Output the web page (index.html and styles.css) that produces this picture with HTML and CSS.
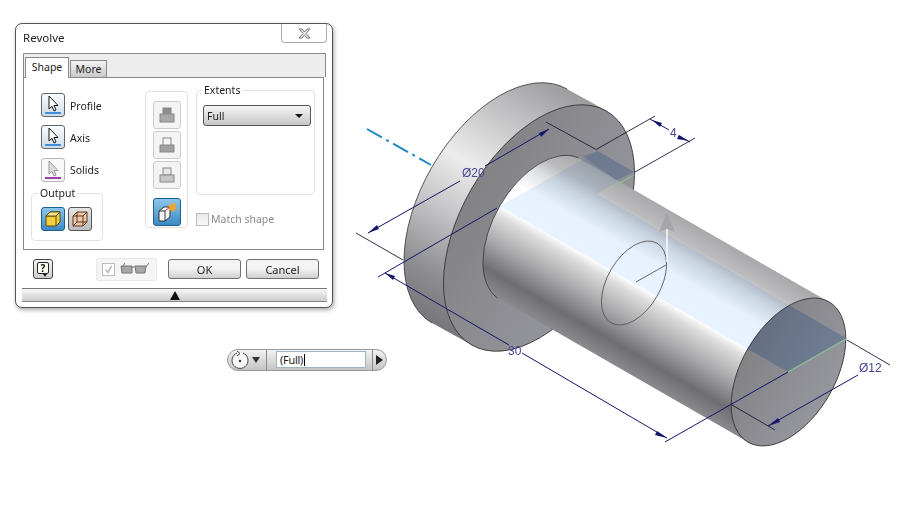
FILE: index.html
```html
<!DOCTYPE html>
<html lang="en">
<head>
  <meta charset="UTF-8">
  <title>Revolve</title>
  <link rel="stylesheet" href="styles.css">
</head>
<body>
  <div class="scene">

    <!-- the part in the viewport -->
    <svg class="part" width="908" height="506" viewBox="0 0 908 506">
      <defs>
        <linearGradient id="rim" gradientUnits="userSpaceOnUse" x1="567" y1="89" x2="432" y2="323">
          <stop offset="0" stop-color="#9c9c9e"/>
          <stop offset="0.16" stop-color="#bcbcbe"/>
          <stop offset="0.42" stop-color="#ececec"/>
          <stop offset="0.62" stop-color="#c4c4c6"/>
          <stop offset="0.85" stop-color="#8c8c90"/>
          <stop offset="1" stop-color="#77777b"/>
        </linearGradient>
        <linearGradient id="shaft" gradientUnits="userSpaceOnUse" x1="829" y1="302" x2="748" y2="442">
          <stop offset="0" stop-color="#a8a8aa"/>
          <stop offset="0.12" stop-color="#bcbcbe"/>
          <stop offset="0.2" stop-color="#dcdee0"/>
          <stop offset="0.33" stop-color="#fdfdfd"/>
          <stop offset="0.5" stop-color="#ffffff"/>
          <stop offset="0.56" stop-color="#dcdcdc"/>
          <stop offset="0.72" stop-color="#a8a8aa"/>
          <stop offset="0.88" stop-color="#6e6e72"/>
          <stop offset="1" stop-color="#8a8a8e"/>
        </linearGradient>
        <linearGradient id="face" x1="0" y1="0" x2="0" y2="1">
          <stop offset="0" stop-color="#838386"/>
          <stop offset="1" stop-color="#96969e"/>
        </linearGradient>
        <clipPath id="end-face">
          <ellipse cx="788.5" cy="372" rx="81" ry="46.8" transform="rotate(-60 788.5 372)"/>
        </clipPath>
      </defs>

      <!-- flange -->
      <path d="M567 89 L607 111 L472 345 L432 323 A135 78 -60 0 1 567 89 Z" fill="url(#rim)"/>
      <path d="M432 323 A135 78 -60 0 1 567 89" class="edge"/>
      <ellipse cx="539" cy="228" rx="135" ry="78" transform="rotate(-60 539 228)" fill="url(#face)" stroke="#333" stroke-width="0.8"/>

      <!-- shaft -->
      <path d="M578.5 158 L829 302 L748 442 L497.5 298 A81 46.8 -60 0 1 578.5 158 Z" fill="url(#shaft)"/>
      <path d="M497.5 298 A81 46.8 -60 0 1 578.5 158" class="edge"/>
      <ellipse cx="788.5" cy="372" rx="81" ry="46.8" transform="rotate(-60 788.5 372)" fill="url(#face)" stroke="#333" stroke-width="0.8"/>

      <!-- sketch plane -->
      <polygon class="plane" points="500,206 788,372 846,338 597,194 634,172 598,151"/>
      <polygon class="plane-dark" points="500,206 788,372 846,338 597,194" clip-path="url(#end-face)"/>
      <polygon class="plane-dark" points="583,156 598,151 634,172 616,180"/>
      <line x1="788" y1="372" x2="846" y2="339" stroke="#86c096" stroke-width="1.4"/>
      <line x1="615" y1="186" x2="634" y2="175" stroke="#86c096" stroke-width="1.4"/>

      <!-- profile circle and direction arrow -->
      <ellipse cx="634" cy="283" rx="46" ry="26.6" transform="rotate(-60 634 283)" fill="none" stroke="#555" stroke-width="0.8"/>
      <line x1="636" y1="282" x2="666" y2="265" stroke="#444" stroke-width="0.8"/>
      <line x1="667" y1="228" x2="667" y2="262" stroke="#fff" stroke-width="1.6" stroke-opacity="0.85"/>
      <polygon points="667,212 659,232 667,229 675,232" fill="#a2a2a8" fill-opacity="0.8"/>

      <!-- revolve axis -->
      <line x1="367" y1="129" x2="431" y2="165" stroke="#1f87c6" stroke-width="2" stroke-dasharray="17 5 3 5"/>

      <!-- dimensions: extension lines -->
      <g class="dim-ext">
        <line x1="356" y1="233" x2="403" y2="260"/>
        <line x1="546" y1="122" x2="597" y2="150"/>
        <line x1="597" y1="149" x2="655" y2="116"/>
        <line x1="635" y1="172" x2="695" y2="138"/>
        <line x1="847" y1="340" x2="890" y2="365"/>
        <line x1="732" y1="405" x2="775" y2="430"/>
      </g>
      <!-- dimensions: lines -->
      <g class="dim-line">
        <line x1="368" y1="233" x2="460" y2="181"/>
        <line x1="485" y1="166" x2="549" y2="129"/>
        <line x1="378" y1="277" x2="497" y2="208"/>
        <line x1="385" y1="273" x2="509" y2="345"/>
        <line x1="522" y1="353" x2="667" y2="438"/>
        <line x1="665" y1="442" x2="788" y2="372"/>
        <line x1="650" y1="119" x2="669" y2="130"/>
        <line x1="678" y1="136" x2="690" y2="142"/>
        <line x1="768" y1="426" x2="858" y2="375"/>
      </g>
      <g class="dim-arrow">
        <polygon points="368,233 377,225 379,229"/>
        <polygon points="549,129 539,133 541,137"/>
        <polygon points="385,273 395,276 393,280"/>
        <polygon points="667,438 657,431 655,435"/>
        <polygon points="652,120 662,123 660,127"/>
        <polygon points="689,141 679,135 677,139"/>
        <polygon points="768,426 778,418 780,422"/>
      </g>
      <text class="dim-text" x="462" y="177">Ø20</text>
      <text class="dim-text" x="670" y="137">4</text>
      <text class="dim-text" x="508" y="355">30</text>
      <text class="dim-text" x="859" y="372">Ø12</text>
    </svg>

    <!-- Revolve dialog -->
    <div class="dialog">
      <div class="title-row">
        <span class="title">Revolve</span>
        <button class="close-btn">
          <svg width="13" height="11" viewBox="0 0 13 11"><path d="M1 1 H4 L6.5 4 L9 1 H12 L8 5.5 L12 10 H9 L6.5 7 L4 10 H1 L5 5.5 Z" fill="#e6e6e6" stroke="#777"/></svg>
        </button>
      </div>

      <div class="tab-strip">
        <div class="tab tab-active">Shape</div>
        <div class="tab">More</div>
      </div>

      <div class="panel">
        <div class="col-select">
          <div class="pick-row">
            <button class="tool-btn">
              <svg width="22" height="22" viewBox="0 0 22 22"><path d="M7 2 V15 L10 12.3 L12 17 L14 16 L12 11.5 H16 Z" fill="#fff" stroke="#111"/><rect x="3" y="18" width="16" height="2" fill="#3f8fdc"/></svg>
            </button>
            <span class="pick-label">Profile</span>
          </div>
          <div class="pick-row">
            <button class="tool-btn">
              <svg width="22" height="22" viewBox="0 0 22 22"><path d="M7 2 V15 L10 12.3 L12 17 L14 16 L12 11.5 H16 Z" fill="#fff" stroke="#111"/><rect x="3" y="18" width="16" height="2" fill="#3f8fdc"/></svg>
            </button>
            <span class="pick-label">Axis</span>
          </div>
          <div class="pick-row pick-row-last">
            <button class="tool-btn tool-btn-off">
              <svg width="22" height="22" viewBox="0 0 22 22"><path d="M7 2 V15 L10 12.3 L12 17 L14 16 L12 11.5 H16 Z" fill="#ddd" stroke="#999"/><rect x="3" y="18" width="16" height="2" fill="#9a3fa8"/></svg>
            </button>
            <span>Solids</span>
          </div>
          <fieldset class="group group-output">
            <legend>Output</legend>
            <button class="tool-btn tool-btn-on">
              <svg width="20" height="20" viewBox="0 0 20 20"><path d="M3 7 L7 3 H17 V13 L13 17 H3 Z" fill="#f5cf3c" stroke="#5a4a10"/><path d="M3 7 H13 V17 M13 7 L17 3" fill="none" stroke="#5a4a10"/><path d="M3 7 L7 3 H17 L13 7 Z" fill="#fbe88a" stroke="#5a4a10"/></svg>
            </button>
            <button class="tool-btn tool-btn-gray">
              <svg width="20" height="20" viewBox="0 0 20 20"><path d="M3 7 L7 3 H17 V13 L13 17 H3 Z" fill="#f0c8a8" stroke="#5a3520"/><path d="M3 7 H13 V17 M13 7 L17 3 M7 3 V13 H17 M7 13 L3 17" fill="none" stroke="#5a3520"/></svg>
            </button>
          </fieldset>
        </div>

        <div class="col-ops">
          <button class="op-btn">
            <svg width="18" height="18" viewBox="0 0 18 18"><rect x="5" y="2" width="8" height="8" fill="#8e8e8e" stroke="#888"/><rect x="2" y="8" width="14" height="8" fill="#a8a8a8" stroke="#888"/></svg>
          </button>
          <button class="op-btn">
            <svg width="18" height="18" viewBox="0 0 18 18"><rect x="5" y="2" width="8" height="8" fill="#f5f5f5" stroke="#888"/><rect x="2" y="9" width="14" height="7" fill="#a0a0a0" stroke="#888"/></svg>
          </button>
          <button class="op-btn">
            <svg width="18" height="18" viewBox="0 0 18 18"><rect x="5" y="2" width="8" height="7" fill="#e6e6e6" stroke="#888"/><rect x="2" y="9" width="14" height="7" fill="#c6c6c6" stroke="#888"/></svg>
          </button>
          <button class="op-btn op-btn-on">
            <svg width="24" height="24" viewBox="0 0 24 24"><path d="M4 11 L9 7 H15 V17 L10 21 H4 Z" fill="#f4f8fb" stroke="#333"/><path d="M4 11 H10 V21" fill="none" stroke="#333"/><path d="M10 11 L15 7" fill="none" stroke="#c8303a"/><path d="M17 1 L18 4.5 L21.5 3 L19.8 6.5 L23 8.5 L19.5 9 L19 12.5 L16.5 10 L13.5 11 L14.8 7.8 L12.5 5 L16 5.2 Z" fill="#f6a623"/></svg>
          </button>
        </div>

        <div class="col-extents">
          <fieldset class="group group-extents">
            <legend>Extents</legend>
            <div class="combo">
              <span>Full</span>
              <i class="combo-arrow"></i>
            </div>
          </fieldset>
          <label class="match-row">
            <span class="check"></span>
            <span>Match shape</span>
          </label>
        </div>
      </div>

      <div class="foot">
        <button class="help-btn"><span class="help-bubble">?</span></button>
        <div class="preview-box">
          <span class="check check-small">
            <svg width="11" height="11" viewBox="0 0 11 11"><path d="M2.5 5.5 L5 8.5 L8.5 2" fill="none" stroke="#bbb" stroke-width="1.6"/></svg>
          </span>
          <svg width="30" height="14" viewBox="0 0 30 14"><path d="M1 4 H12 V11 H2 Z M15 4 H26 L25 11 H16 Z" fill="#a6a6a6" stroke="#777"/><path d="M12 5 H15 M26 5 L29 1" fill="none" stroke="#777"/><path d="M3 4 L5 1" stroke="#777" fill="none"/></svg>
        </div>
        <button class="push-btn">OK</button>
        <button class="push-btn">Cancel</button>
      </div>

      <div class="more-bar"><i class="more-arrow"></i></div>
    </div>

    <!-- mini toolbar -->
    <div class="minibar">
      <div class="mini-tool">
        <svg width="20" height="20" viewBox="0 0 20 20"><path d="M7 3 A8 8 0 1 0 13 3" fill="#f6f6f6" stroke="#444"/><path d="M7 1 L10 3.5 L7 6" fill="none" stroke="#444"/><circle cx="10" cy="11" r="1.2" fill="#333"/></svg>
        <i class="mini-down"></i>
      </div>
      <div class="mini-input"><span class="mini-text">(Full)</span></div>
      <div class="mini-go"><i class="mini-right"></i></div>
    </div>

  </div>
</body>
</html>
```

FILE: styles.css
```css
* {
  box-sizing: border-box;
}

body {
  margin: 0;
  background: #fff;
  font-family: "Noto Sans", "Open Sans", sans-serif;
  font-size: 10.5px;
  color: #222;
}

button {
  font: inherit;
  color: inherit;
  padding: 0;
  display: flex;
  align-items: center;
  justify-content: center;
}

.scene {
  position: relative;
  width: 908px;
  height: 506px;
  overflow: hidden;
}

.part {
  position: absolute;
  left: 0;
  top: 0;
}

.edge {
  fill: none;
  stroke: #333;
  stroke-width: 0.8;
}

.plane {
  fill: #e8f3ff;
  mix-blend-mode: multiply;
}

.plane-dark {
  fill: #d6e4f6;
  mix-blend-mode: multiply;
}

.dim-ext line {
  stroke: #1a1a3a;
  stroke-width: 0.9;
}

.dim-line line {
  stroke: #14146e;
  stroke-width: 1;
}

.dim-arrow polygon {
  fill: #14146e;
}

.dim-text {
  font-family: "Liberation Sans", sans-serif;
  font-size: 12px;
  fill: #45459a;
}

/* dialog */

.dialog {
  position: absolute;
  left: 15px;
  top: 23px;
  width: 318px;
  height: 285px;
  background: #fff;
  border: 1px solid #555;
  border-radius: 7px;
  box-shadow: 1px 2px 4px rgba(0, 0, 0, 0.35);
  padding: 0 6px 0 7px;
}

.title-row {
  display: flex;
  justify-content: space-between;
  height: 29px;
}

.title {
  padding: 6px 0 0;
  font-size: 11.5px;
}

.close-btn {
  width: 46px;
  height: 19px;
  margin-right: -1px;
  background: #fff;
  border: 1px solid #aaa;
  border-top: none;
  border-radius: 0 0 4px 4px;
}

.tab-strip {
  display: flex;
  align-items: flex-end;
  width: 303px;
  height: 24px;
  padding-left: 1px;
  background: #ededed;
  border: 1px solid #888;
  border-bottom: none;
  border-radius: 1px 1px 0 0;
}

.tab {
  width: 37px;
  height: 17px;
  margin-left: 1px;
  text-align: center;
  line-height: 17px;
  border: 1px solid #888;
  border-bottom: none;
  background: linear-gradient(#f4f4f4, #c8c8c8);
}

.tab-active {
  width: 44px;
  height: 21px;
  margin: 0 0 -1px;
  line-height: 19px;
  background: #fff;
  position: relative;
}

.panel {
  display: flex;
  width: 301px;
  height: 173px;
  padding: 14px 0 0 7px;
  border: 1px solid #888;
  background: #fff;
}

.col-select {
  width: 72px;
  margin-right: 42px;
}

.pick-row {
  display: flex;
  align-items: center;
  gap: 5px;
  height: 24px;
  margin: 1px 0 8px 10px;
}

.pick-row-last {
  margin-top: 9px;
}

.pick-label {
  padding-top: 2px;
}

.tool-btn {
  width: 24px;
  height: 24px;
  border: 1px solid #5b6670;
  border-radius: 3px;
  background: linear-gradient(#fafcfe, #cfdbe6);
}

.tool-btn-off {
  border-color: #b8b8b8;
  background: #f8f8f8;
}

.tool-btn-on {
  border-color: #1f5f8c;
  background: linear-gradient(#8cc6ea, #3a8bc4);
}

.tool-btn-gray {
  border-color: #555;
  background: linear-gradient(#e6e6e6, #bcbcbc);
}

.group {
  margin: 0;
  padding: 0;
  border: 1px solid #e2e2e2;
  border-radius: 4px;
}

.group legend {
  padding: 0 2px;
  line-height: 13px;
}

.group-output {
  display: flex;
  gap: 3px;
  height: 54px;
  margin-top: -3px;
  padding: 7px 0 0 9px;
}

.group-output legend {
  margin-left: -3px;
}

.col-ops {
  display: flex;
  flex-direction: column;
  align-items: center;
  gap: 2px;
  width: 43px;
  height: 137px;
  margin: -1px 8px 0 0;
  padding-top: 9px;
  border: 1px solid #e2e2e2;
  border-radius: 4px;
}

.op-btn {
  width: 28px;
  height: 28px;
  border: 1px solid #ccc;
  border-radius: 3px;
  background: #f4f4f4;
}

.op-btn-on {
  margin-top: 7px;
  border-color: #1f5f8c;
  background: linear-gradient(#8cc6ea, #3a8bc4);
}

.col-extents {
  width: 119px;
  margin-top: -8px;
}

.group-extents {
  height: 111px;
  padding: 8px 0 0 6px;
}

.group-extents legend {
  margin-left: -1px;
}

.combo {
  display: flex;
  align-items: center;
  justify-content: space-between;
  width: 108px;
  height: 21px;
  padding: 0 7px 0 3px;
  border: 1px solid #555;
  border-radius: 3px;
  background: linear-gradient(#f6f6f6, #c6c6c6);
}

.combo-arrow {
  border: 4px solid transparent;
  border-top: 4px solid #111;
  border-bottom: none;
}

.match-row {
  display: flex;
  align-items: center;
  gap: 2px;
  margin-top: 17px;
  color: #8a8a8a;
}

.check {
  display: flex;
  width: 13px;
  height: 13px;
  border: 1px solid #bbb;
  background: linear-gradient(#e8e8e8, #f8f8f8);
}

.check-small {
  background: #fff;
}

/* buttons under the tabs */

.foot {
  display: flex;
  align-items: center;
  width: 303px;
  height: 38px;
  padding-left: 10px;
}

.help-btn {
  width: 20px;
  height: 20px;
  border: 1px solid #444;
  border-radius: 3px;
  background: linear-gradient(#f4f4f4, #cfcfcf);
}

.help-bubble {
  position: relative;
  display: block;
  width: 12px;
  height: 12px;
  line-height: 10px;
  font-size: 10px;
  font-weight: bold;
  text-align: center;
  color: #111;
  background: #fffff0;
  border: 1px solid #222;
  border-radius: 2px;
  margin-top: -2px;
}

.help-bubble::after {
  content: "";
  position: absolute;
  left: 5px;
  bottom: -4px;
  border: 2px solid transparent;
  border-top: 3px solid #222;
  border-bottom: none;
}

.preview-box {
  display: flex;
  align-items: center;
  gap: 5px;
  width: 61px;
  height: 23px;
  margin: 0 11px 0 43px;
  padding-left: 5px;
  background: #f5f5f5;
  border: 1px solid #e8e8e8;
  border-radius: 2px;
}

.push-btn {
  width: 73px;
  height: 20px;
  margin-right: 5px;
  font-size: 11px;
  border: 1px solid #707070;
  border-radius: 3px;
  background: linear-gradient(#f4f4f4 45%, #d0d0d0);
}

.more-bar {
  display: flex;
  justify-content: center;
  align-items: center;
  width: 305px;
  height: 14px;
  margin-left: -1px;
  border-top: 1px solid #777;
  border-bottom: 1px solid #888;
  background: linear-gradient(#f8f8f8, #cccccc);
}

.more-arrow {
  border: 5px solid transparent;
  border-bottom: 9px solid #111;
  border-top: none;
}

/* mini toolbar */

.minibar {
  position: absolute;
  left: 227px;
  top: 349px;
  display: flex;
  width: 160px;
  height: 22px;
  border: 1px solid #999;
  border-radius: 11px;
  background: linear-gradient(#f2f2f2, #c4c4c4);
}

.mini-tool {
  display: flex;
  align-items: center;
  gap: 2px;
  width: 39px;
  padding-left: 2px;
  border-right: 1px solid #888;
}

.mini-down {
  border: 4px solid transparent;
  border-top: 6px solid #333;
  border-bottom: none;
}

.mini-input {
  width: 105px;
  padding: 1px 6px 0 9px;
}

.mini-text {
  display: block;
  height: 17px;
  padding-left: 3px;
  line-height: 16px;
  font-size: 11px;
  letter-spacing: -0.3px;
  background: #fff;
  border: 1px solid #9fb4c4;
  position: relative;
}

.mini-text::after {
  content: "";
  display: inline-block;
  width: 1px;
  height: 12px;
  margin-left: 1px;
  vertical-align: -2px;
  background: #000;
}

.mini-go {
  display: flex;
  align-items: center;
  justify-content: center;
  flex: 1;
  border-left: 1px solid #888;
}

.mini-right {
  border: 5px solid transparent;
  border-left: 7px solid #222;
  border-right: none;
}
```
